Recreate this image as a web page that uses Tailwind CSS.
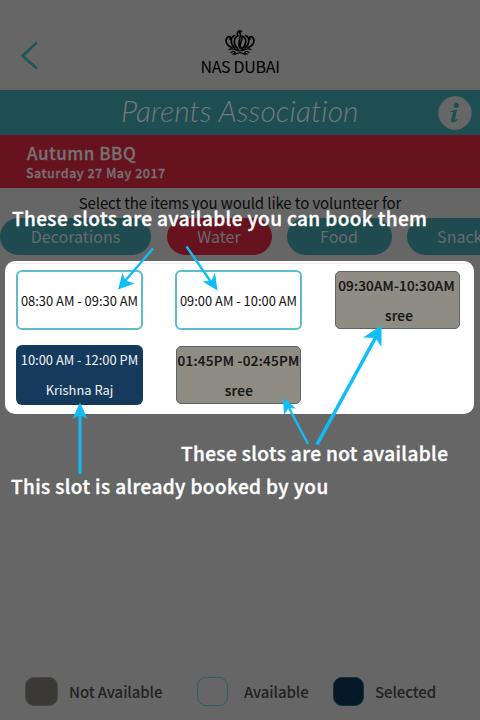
<!DOCTYPE html>
<html lang="en">
<head>
<meta charset="utf-8">
<title>Parents Association</title>
<script src="https://cdn.jsdelivr.net/npm/@tailwindcss/browser@4"></script>
</head>
<body class="bg-[#666666]">
<div class="relative flex h-[720px] w-[480px] flex-col overflow-hidden whitespace-nowrap bg-[#666666] font-['Noto_Sans_CJK_SC',sans-serif]">

  <header class="grid h-[90px] shrink-0 grid-cols-3">
    <svg class="mt-[40px] ml-[20px]" width="20" height="32" viewBox="0 0 20 32" fill="none" stroke="#1f5659" stroke-width="2.7"><path d="M17 2.5 2.5 15.7 17 28.5"/></svg>
    <div class="flex flex-col items-center pt-[29px]">
      <svg width="30" height="28" viewBox="0 0 30 28" fill="none" stroke="#000" stroke-width="1.6" stroke-linecap="round">
        <path d="M13 20C8 15 8 9 13 7M17 20C22 15 22 9 17 7M13 7C11 4 14 0 16.500 2.500M14.500 3C18 7 11 14 15 19M17 8C18 12 13 15 16 19" />
        <path d="M10 19C5 15 5 8 9.500 6.500M20 19C25 15 25 8 20.500 6.500" stroke-width="1.7"/>
        <path d="M7 18.500C-.5 16 0 9 4 7.500C6 7.500 6 9 5 10M23 18.500C30.500 16 30 9 26 7.500C24 7.500 24 9 25 10" stroke-width="1.7"/>
        <path d="M4 20.500C8 18.500 11 22 15 21.500C19 22 22 18.500 26 20.500M6 23.500C10 21 12 24 8 25M24 23.500C20 21 18 24 22 25M10 25.500C14 23 16 23 20 25.500" stroke-width="1.3"/>
      </svg>
      <span class="-mt-px text-[16px] leading-[20px] tracking-[-0.3px] text-black">NAS DUBAI</span>
    </div>
  </header>

  <div class="flex h-[45px] shrink-0 items-center justify-between bg-[#1f4e52] pr-[8px] pl-[121px]">
    <h1 class="mb-[5px] text-[30px] leading-[39px] font-light italic tracking-[0.05px] text-[#73797a] font-['Lato',sans-serif]">Parents Association</h1>
    <svg width="34" height="34" viewBox="0 0 34 34"><circle cx="17" cy="17" r="16.7" fill="#666"/><circle cx="18.3" cy="9.3" r="2.6" fill="#1f4e52"/><path d="M12.6 15.1C15 14.8 17 14 19.3 13.5L17 22.6C16.7 24 17.2 24.3 19.5 22.7L20 23.4C17.5 26.3 15 27 13.6 26C12.8 25.3 13 24.2 13.3 23L15 16.8C15.2 16 14 16 12.5 16Z" fill="#1f4e52"/></svg>
  </div>

  <div class="flex h-[53px] shrink-0 flex-col bg-[#67131f] pt-[8px] pl-[26px] font-medium text-[#777075] [-webkit-text-stroke:0.3px_#777075]">
    <span class="pl-px text-[17px] leading-[20px] tracking-[0.5px]">Autumn BBQ</span>
    <span class="text-[12.5px] leading-[20px] tracking-[0.5px]">Saturday 27 May 2017</span>
  </div>

  <p class="h-[30px] shrink-0 pt-[4px] text-center text-[15px] leading-[22px] tracking-[-0.1px] text-[#0c0c0c]">Select the items you would like to volunteer for</p>

  <nav class="flex h-[37px] shrink-0 gap-[15px] text-[16px] leading-[37px] text-[#666b6c]">
    <span class="mr-[0.5px] w-[151px] shrink-0 rounded-full bg-[#1f4b50] text-center">Decorations</span>
    <span class="w-[105px] shrink-0 rounded-full bg-[#67131f] text-center">Water</span>
    <span class="w-[105px] shrink-0 rounded-full bg-[#1f4b50] text-center">Food</span>
    <span class="w-[114px] shrink-0 rounded-full bg-[#1f4b50] text-center">Snacks</span>
  </nav>

  <main class="mt-[6px] ml-[5px] h-[153px] w-[469px] shrink-0 overflow-hidden rounded-[10px] bg-white pt-[2px]">
    <div class="h-px bg-[#eeeeee]"></div>
    <div class="grid grid-cols-[127px_127px_127px] items-center gap-x-[32px] gap-y-[15px] pt-[6px] pl-[11px] text-center text-[12.9px] text-[#111]">
      <div class="h-[60px] rounded-[6px] border-2 border-[#5cbccd] leading-[57px]">08:30 AM - 09:30 AM</div>
      <div class="h-[60px] rounded-[6px] border-2 border-[#5cbccd] leading-[57px]">09:00 AM - 10:00 AM</div>
      <div class="ml-px flex h-[58px] w-[125px] flex-col items-center gap-[10px] rounded-[5px] border border-[#5b666a] bg-[#8f8c84] pt-[3px] text-[13.5px] leading-[20px] font-medium tracking-[0.2px] text-[#161616] [-webkit-text-stroke:0.2px_#161616]"><span class="pr-[2px]">09:30AM-10:30AM</span><span class="pl-[3px]">sree</span></div>
      <div class="flex h-[60px] flex-col items-center gap-[10px] rounded-[6px] bg-[#163a5c] pt-[5px] leading-[20px] text-[#f0f3f6]"><span>10:00 AM - 12:00 PM</span><span>Krishna Raj</span></div>
      <div class="ml-px flex h-[58px] w-[125px] flex-col items-center gap-[10px] rounded-[5px] border border-[#5b666a] bg-[#8f8c84] pt-[3px] text-[13.5px] leading-[20px] font-medium tracking-[0.3px] text-[#161616] [-webkit-text-stroke:0.2px_#161616]"><span>01:45PM -02:45PM</span><span class="pl-px">sree</span></div>
    </div>
  </main>

  <footer class="mt-auto flex h-[57px] shrink-0 items-start pt-[14px] pl-[25px] text-[15px] leading-[29px] font-medium tracking-[-0.1px] text-[#222]">
    <i class="h-[29px] w-[33px] rounded-[9px] border border-[#464644] bg-[#3a3935]"></i><span class="ml-[11px] w-[128px]">Not Available</span>
    <i class="h-[29px] w-[31px] rounded-[9px] border border-[#2c5f65]"></i><span class="ml-[16px] w-[89px]">Available</span>
    <i class="h-[29px] w-[31px] rounded-[9px] border border-[#12303f] bg-[#061725]"></i><span class="ml-[11px]">Selected</span>
  </footer>

  <!-- Coach-mark annotations over the page -->
  <div class="absolute top-[204px] left-[12px] text-[19px] leading-[28px] font-medium tracking-[0.4px] text-white [-webkit-text-stroke:0.4px_white]">These slots are available you can book them</div>
  <div class="absolute top-[439px] left-[181px] text-[19px] leading-[28px] font-medium tracking-[0.4px] text-white [-webkit-text-stroke:0.4px_white]">These slots are not available</div>
  <div class="absolute top-[472px] left-[11px] text-[19px] leading-[28px] font-medium tracking-[0.4px] text-white [-webkit-text-stroke:0.4px_white]">This slot is already booked by you</div>
  <svg class="absolute top-0 left-0" width="480" height="720" viewBox="0 0 480 720" fill="#11bdf8" stroke="#11bdf8">
    <g stroke-width="2.4"><path d="M153 248.5 125 281M186.5 246.500 211 282M308 444 289 408"/></g>
    <path d="M80 474V414" stroke-width="3"/><path d="M317 444.500 377 335" stroke-width="3.6"/>
    <g stroke="none">
      <path d="M118 289.500 122.500 273 125.500 280.500 134.500 283.500Z"/>
      <path d="M217.500 290.500 202.500 281.500 211.500 280.500 215 272.500Z"/>
      <path d="M283 397.500 296 408.500 288.500 408 284 415Z"/>
      <path d="M80 402.500 87.500 419 80 415 72.500 419Z"/>
      <path d="M381.500 325.500 381.500 347 375.500 338 363 337.500Z"/>
    </g>
  </svg>
</div>
</body>
</html>
